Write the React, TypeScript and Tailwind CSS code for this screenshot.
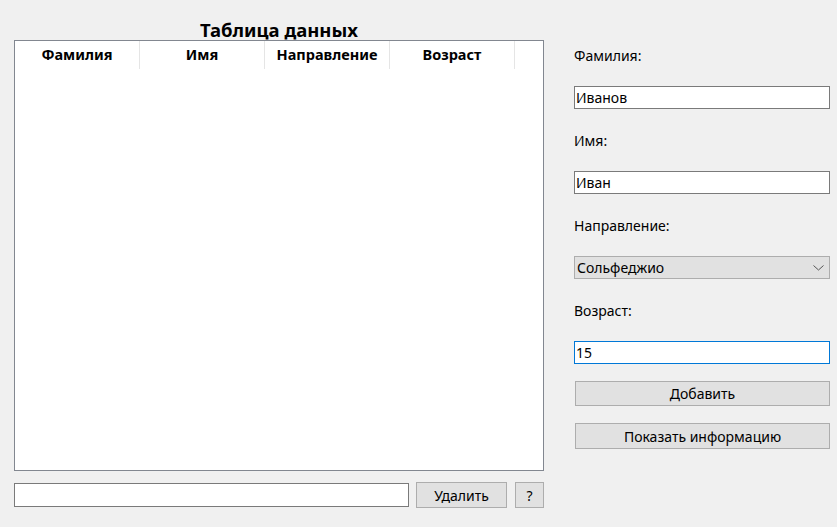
const columns = ["Фамилия", "Имя", "Направление", "Возраст"];

function Label({ text }: { text: string }) {
    return <div className="h-[20px] text-[14px] leading-[20px] text-black">{text}</div>;
}

function TextBox({ value, focused }: { value: string; focused?: boolean }) {
    return (
        <div
            className={`flex h-[23px] items-center border bg-white px-[1px] text-[14px] text-black ${
                focused ? "border-[#0078d7]" : "border-[#7a7a7a]"
            }`}
        >
            {value}
        </div>
    );
}

function Button({ text, className }: { text: string; className: string }) {
    return (
        <div
            className={`flex items-center justify-center border border-[#adadad] bg-[#e1e1e1] text-[14px] text-black ${className}`}
        >
            {text}
        </div>
    );
}

export default function App() {
    return (
        <div
            className="flex h-[527px] w-[837px] bg-[#f0f0f0]"
            style={{ fontFamily: '"Noto Sans", "Open Sans", sans-serif' }}
        >
            {/* left: table */}
            <div className="ml-[14px] flex w-[530px] flex-col pt-[20px]">
                <div className="h-[20px] text-center text-[18.5px] font-bold leading-[20px] text-black">
                    Таблица данных
                </div>
                <div className="h-[431px] border border-[#828790] bg-white">
                    <div className="flex h-[28px]">
                        {columns.map((col) => (
                            <div
                                key={col}
                                className="flex w-[125px] items-center justify-center border-r border-[#e5e5e5] text-[14.5px] font-bold text-black"
                            >
                                {col}
                            </div>
                        ))}
                    </div>
                </div>
                <div className="mt-[11px] flex items-start">
                    <div className="mt-[1px] h-[24px] w-[395px] border border-[#7a7a7a] bg-white" />
                    <Button text="Удалить" className="ml-[7px] h-[26px] w-[91px]" />
                    <Button text="?" className="ml-[8px] h-[26px] w-[29px]" />
                </div>
            </div>

            {/* right: form */}
            <div className="ml-[30px] flex w-[256px] flex-col pt-[46px]">
                <Label text="Фамилия:" />
                <div className="mt-[20px]">
                    <TextBox value="Иванов" />
                </div>
                <div className="mt-[22px]">
                    <Label text="Имя:" />
                </div>
                <div className="mt-[20px]">
                    <TextBox value="Иван" />
                </div>
                <div className="mt-[22px]">
                    <Label text="Направление:" />
                </div>
                <div className="mt-[20px] flex h-[23px] items-center justify-between border border-[#adadad] bg-[#e1e1e1] pl-[2px] pr-[5px] text-[14px] text-black">
                    <span>Сольфеджио</span>
                    <svg width="11" height="6" viewBox="0 0 11 6" fill="none">
                        <path d="M0.5 0.5 L5.5 5 L10.5 0.5" stroke="#555" strokeWidth="1" />
                    </svg>
                </div>
                <div className="mt-[22px]">
                    <Label text="Возраст:" />
                </div>
                <div className="mt-[20px]">
                    <TextBox value="15" focused />
                </div>
                <Button text="Добавить" className="ml-[1px] mt-[17px] h-[25px] w-[255px]" />
                <Button text="Показать информацию" className="ml-[1px] mt-[17px] h-[26px] w-[255px]" />
            </div>
        </div>
    );
}
